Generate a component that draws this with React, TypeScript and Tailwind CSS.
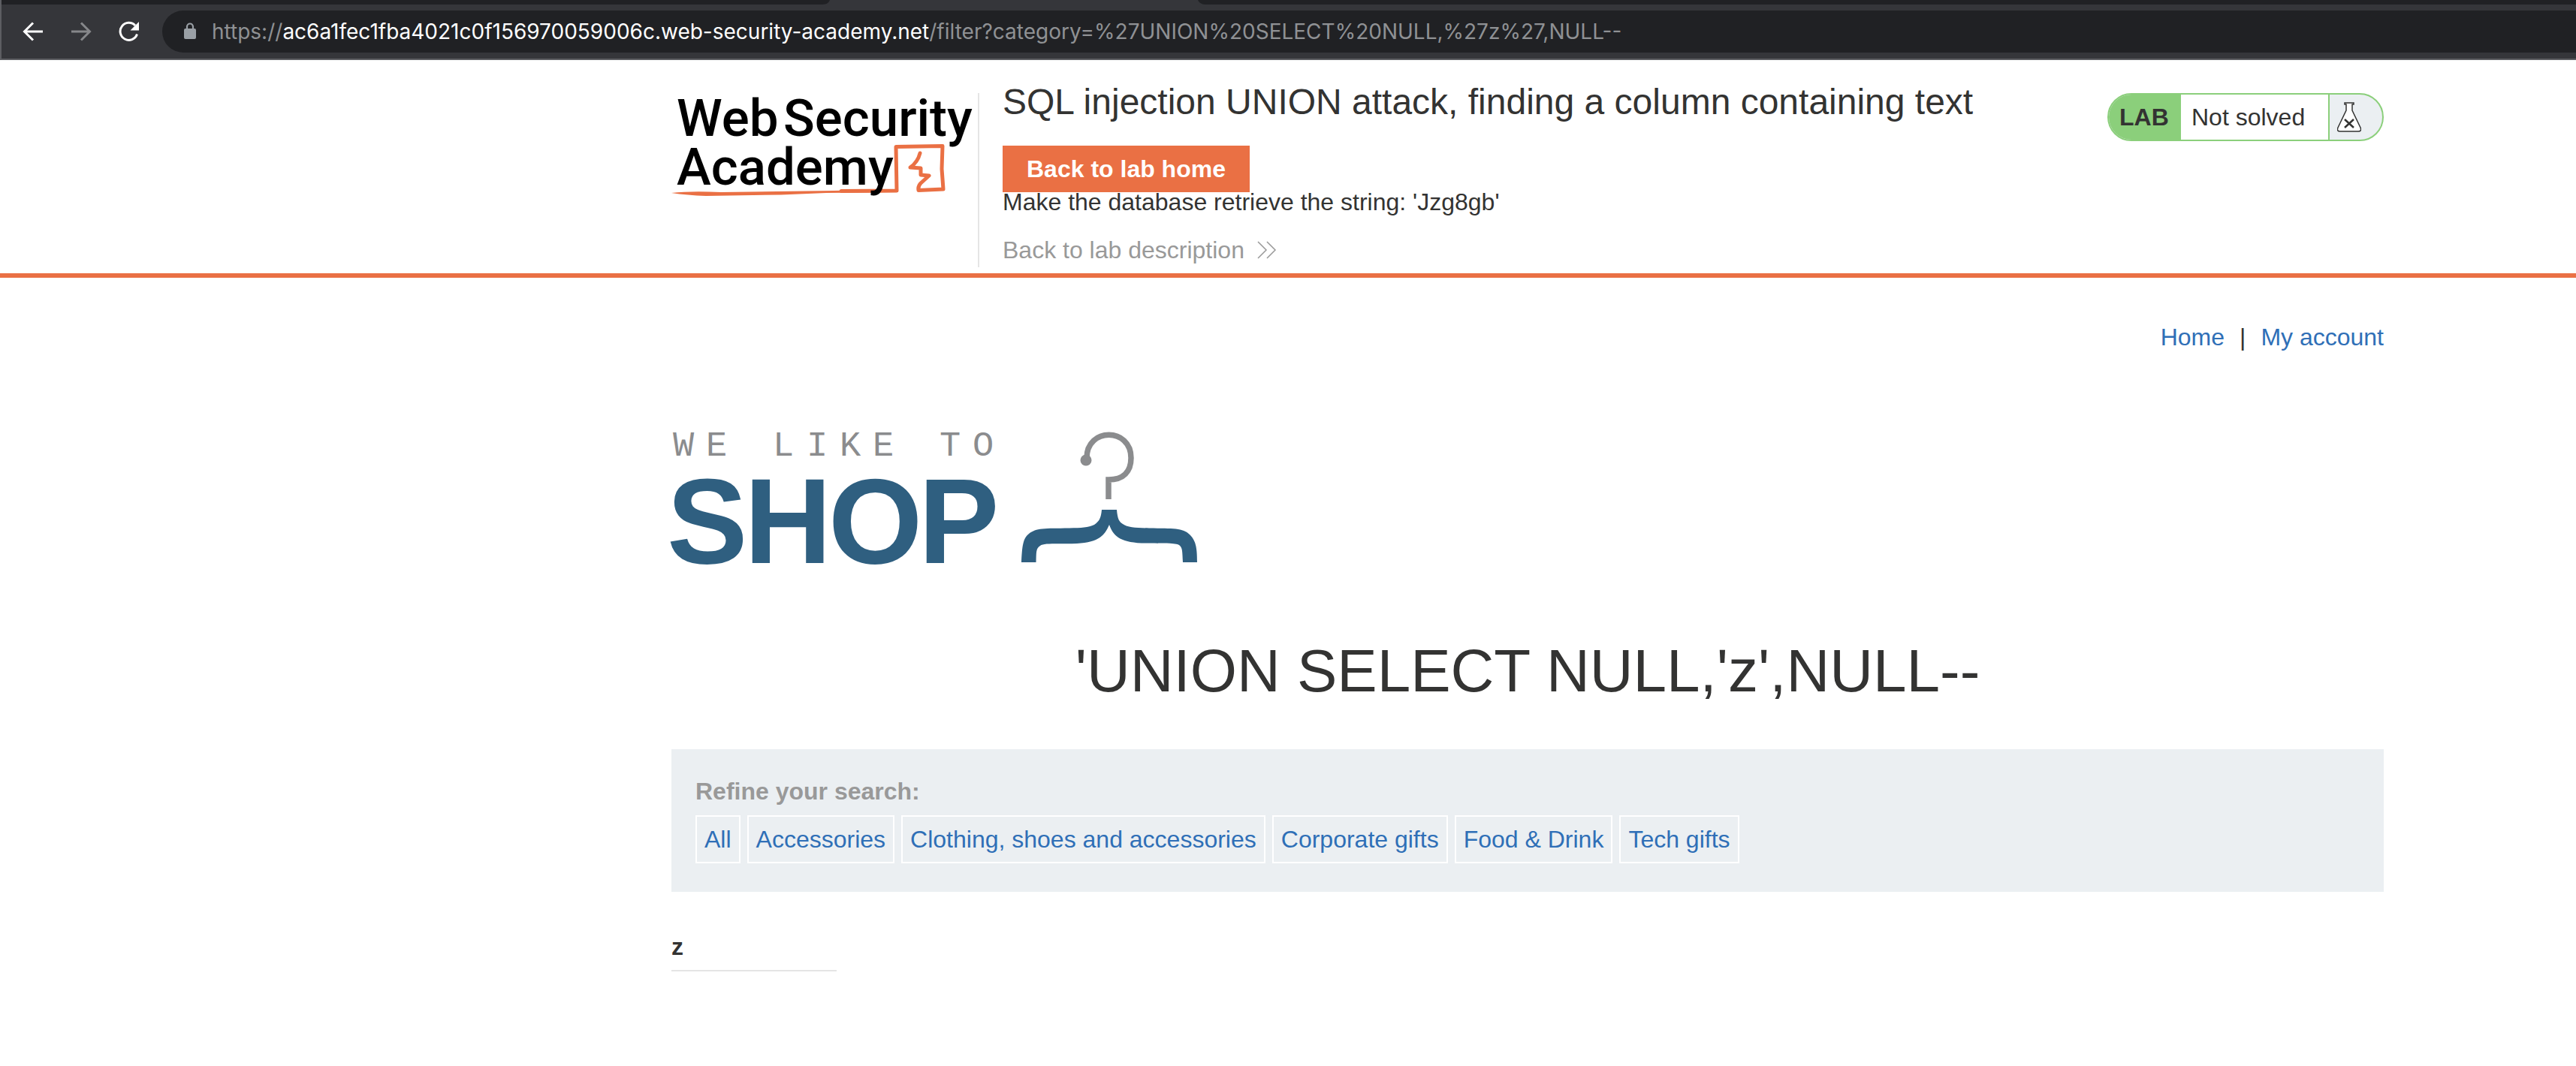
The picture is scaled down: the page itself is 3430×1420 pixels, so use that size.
import React from "react";

const categories = [
  "All",
  "Accessories",
  "Clothing, shoes and accessories",
  "Corporate gifts",
  "Food & Drink",
  "Tech gifts",
];

function BrowserBar() {
  return (
    <header className="border-b-2 border-l-2 border-[#5d5e62] bg-[#35363a]">
      <div className="flex h-1.5 bg-[#202124]">
        <svg className="ml-[1093px] h-1.5 w-[518px]" viewBox="0 0 518 6" aria-hidden="true">
          <path d="M0 6C6 6 9 3 10 0H500C502 4 505 6 512 6Z" fill="#35363a" />
        </svg>
      </div>
      <div className="flex items-center py-2">
        <button className="ml-7" aria-label="Back">
          <svg width="28" height="28" viewBox="0 0 28 28" fill="none" stroke="#fff" strokeWidth="3">
            <path d="M27 14H3M14 2.500L2.500 14L14 25.500" />
          </svg>
        </button>
        <button className="ml-9" aria-label="Forward">
          <svg width="28" height="28" viewBox="0 0 28 28" fill="none" stroke="#86878a" strokeWidth="3">
            <path d="M1 14H25M14 2.500L25.500 14L14 25.500" />
          </svg>
        </button>
        <button className="ml-9" aria-label="Reload">
          <svg width="28" height="28" viewBox="0 0 28 28">
            <path d="M24.500 17.500A11.500 11.500 0 1 1 22 6" fill="none" stroke="#fff" strokeWidth="3" />
            <path d="M27 1V12.500H15.500Z" fill="#fff" />
          </svg>
        </button>
        <div className="ml-[30px] flex h-14 flex-1 items-center rounded-l-full bg-[#202124]">
          <svg className="ml-7 shrink-0" width="18" height="24" viewBox="0 0 18 24" aria-hidden="true">
            <rect x="1" y="8" width="16" height="14" rx="2" fill="#9aa0a6" />
            <path d="M5 9V5.500A4 4 0 0 1 13 5.500V9" fill="none" stroke="#9aa0a6" strokeWidth="2.200" />
          </svg>
          <p className="ml-5 font-[Inter,sans-serif] text-[28px] whitespace-nowrap text-[#8f9194]">
            https://
            <span className="text-white">ac6a1fec1fba4021c0f156970059006c.web-security-academy.net</span>
            /filter?category=%27UNION%20SELECT%20NULL,%27z%27,NULL--
          </p>
        </div>
      </div>
    </header>
  );
}

function AcademyLogo() {
  return (
    <svg className="overflow-visible" width="408" height="150" viewBox="894 120 408 150" role="img" aria-label="Web Security Academy">
      <g fill="none" stroke="#ea7044" strokeLinejoin="round" strokeLinecap="round" strokeWidth="5">
        <path d="M1120 254.500L1194 254L1193 195.500L1255 194.500L1254 225L1256 252L1223 253.500Q1222 248 1226 244L1237 234L1226 233V224L1212 223Q1222 216 1225 204" />
      </g>
      <path d="M894 257Q920 254 960 256L1110 254L1196 252V256L1100 257L1040 259.500L940 261Q915 260 894 257Z" fill="#ea7044" />
      <g className="font-[Roboto,sans-serif] font-medium" fontSize="69" fill="#000">
        <text x="901" y="181">Web</text>
        <text x="1043" y="181">Security</text>
        <text x="901" y="246">Academy</text>
      </g>
    </svg>
  );
}

function LabStatus() {
  return (
    <div className="mt-11 flex h-16 overflow-hidden rounded-full border-2 border-[#8bcf7b] bg-[#ebeff2] text-[32px] leading-[60px]">
      <strong className="w-24 bg-[#8bcf7b] pl-3.5">LAB</strong>
      <span className="w-[198px] border-r-2 border-[#8bcf7b] bg-white pl-3.5">Not solved</span>
      <svg className="mt-2.5 mr-7 ml-2.5" width="32" height="40" viewBox="0 0 32 40" role="img" aria-label="Flask">
        <path
          d="M10 1H22V3H20V11L31 34Q33 39 28 39H4Q-1 39 1 34L12 11V3H10Z"
          fill="#fff"
          stroke="#333332"
          strokeWidth="1.500"
        />
        <path d="M10 23L22 34M22 23L10 34" stroke="#333332" strokeWidth="2.500" />
      </svg>
    </div>
  );
}

function LabHeader() {
  return (
    <section className="flex h-[290px] items-start border-b-6 border-[#ea7044] pr-64 pl-[894px]">
      <div className="mt-11 flex h-[232px] w-[410px] shrink-0 items-start border-r-2 border-[#e5e5e5]">
        <div className="-mt-1">
          <AcademyLogo />
        </div>
      </div>
      <div className="ml-[31px] flex flex-1 flex-col items-start text-[32px] leading-9">
        <h2 className="mt-7 text-[48px] leading-[56px]">
          SQL injection UNION attack, finding a column containing text
        </h2>
        <a href="#home" className="mt-[30px] bg-[#ea7044] px-8 py-[13px] font-bold text-white">
          Back to lab home
        </a>
        <p className="-mt-[5px]">Make the database retrieve the string: 'Jzg8gb'</p>
        <a href="#description" className="mt-7 flex items-center text-[#999]">
          Back to lab description
          <svg className="ml-4" width="28" height="24" viewBox="0 0 28 24" fill="none" stroke="#999" strokeWidth="1.500" aria-hidden="true">
            <path d="M2 1L13 12L2 23M14 1L25 12L14 23" />
          </svg>
        </a>
      </div>
      <LabStatus />
    </section>
  );
}

function ShopLogo() {
  return (
    <svg className="overflow-visible" width="702" height="180" viewBox="892 574 702 180" role="img" aria-label="We like to shop">
      <text
        x="896 940 1029 1074 1118 1162 1251 1295"
        y="607"
        fontSize="47"
        fill="#8b8c8e"
        className="font-['Liberation_Mono',monospace]"
      >
        WELIKETO
      </text>
      <text
        x="888 991 1103 1223"
        y="750"
        fontSize="161"
        fill="#2f5f80"
        className="font-['Liberation_Sans',sans-serif] font-bold"
      >
        SHOP
      </text>
      <path d="M1447 610C1447 569 1506 569 1506 610C1506 628 1496 639 1476 639V665" fill="none" stroke="#8b8c8e" strokeWidth="7.500" />
      <circle cx="1446" cy="613" r="7.500" fill="#8b8c8e" />
      <path
        d="M1467 679H1487C1488 691 1490 695 1495 698C1502 703 1512 703 1530 703.500C1562 704 1575 703 1584 712C1592 720 1594 728 1594 749H1575C1574 735 1575 730 1570 726C1565 723 1548 724 1520 723.500C1490 722 1482 713 1477 699C1471 713 1464 722 1434 724C1406 725 1390 723 1385 727C1379 731 1380 736 1379.500 749H1360C1361 728 1362 717 1370 711C1380 703 1390 704 1424 703.500C1440 703 1449 703 1457 699C1464 694 1466 690 1467 679Z"
        fill="#2f5f80"
      />
    </svg>
  );
}

export default function App() {
  return (
    <div className="min-h-screen overflow-x-hidden bg-white font-['Liberation_Sans',Arial,sans-serif] text-[#333332]">
      <BrowserBar />
      <LabHeader />
      <main className="pr-64 pl-[894px] text-[32px] leading-9">
        <nav className="flex justify-end gap-5 pt-[61px] text-[#2f6fb7]">
          <a href="#home">Home</a>
          <span className="text-[#333332]">|</span>
          <a href="#account">My account</a>
        </nav>
        <div className="-ml-0.5 pt-[107px]">
          <ShopLogo />
        </div>
        <h1 className="mt-[94px] text-center text-[80px] leading-[92px]">'UNION SELECT NULL,'z',NULL--</h1>
        <section className="mt-[58px] bg-[#ebeff2] px-8 py-[38px]">
          <h3 className="font-bold text-[#999]">Refine your search:</h3>
          <div className="mt-3.5 flex flex-wrap gap-x-[9px] gap-y-2">
            {categories.map((name) => (
              <a
                key={name}
                href="#category"
                className="border-2 border-white px-2.5 py-3 text-[#2f6fb7]"
              >
                {name}
              </a>
            ))}
          </div>
        </section>
        <table className="mt-[55px] w-[220px] text-left">
          <tbody>
            <tr>
              <th className="border-b-2 border-[#e5e5e5] p-0 pb-[13px] font-bold">z</th>
            </tr>
          </tbody>
        </table>
      </main>
    </div>
  );
}
